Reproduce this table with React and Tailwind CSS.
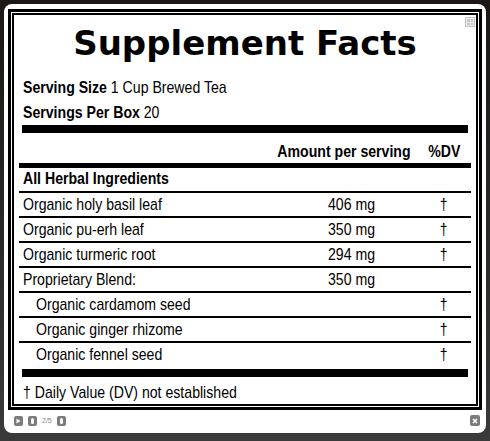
function N({ children, o = 'l' }) {
  const cls =
    o === 'r'
      ? 'inline-block whitespace-nowrap scale-x-[0.83] origin-right'
      : o === 'c'
      ? 'inline-block whitespace-nowrap scale-x-[0.83] origin-center'
      : 'inline-block whitespace-nowrap scale-x-[0.83] origin-left';
  return <span className={cls}>{children}</span>;
}

export default function App() {
  const rows = [
    { name: 'Organic holy basil leaf', amt: '406 mg', dv: '†' },
    { name: 'Organic pu-erh leaf', amt: '350 mg', dv: '†' },
    { name: 'Organic turmeric root', amt: '294 mg', dv: '†' },
    { name: 'Proprietary Blend:', amt: '350 mg', dv: '' },
    { name: 'Organic cardamom seed', amt: '', dv: '†', indent: true },
    { name: 'Organic ginger rhizome', amt: '', dv: '†', indent: true },
    { name: 'Organic fennel seed', amt: '', dv: '†', indent: true, last: true },
  ];
  return (
    <div className="w-[490px] h-[441px] overflow-hidden bg-linear-to-b from-[#1b1815] to-[#3a3a3a] pt-[4px] pl-[4px]">
      <div className="w-[482px] h-[429px] bg-white rounded-[8px] pt-[5px] px-[4px] flex flex-col">
        <div className="relative w-[474px] h-[401px] border-[3px] border-black p-px bg-white">
          <div className="h-full border-2 border-black flex flex-col text-black font-['Liberation_Sans',Arial,sans-serif] text-[17px]">
            <div className="mt-[8px] h-[40px] leading-[40px] text-center font-['DejaVu_Sans',sans-serif] font-bold text-[34px]">
              Supplement Facts
            </div>
            <div className="mt-[12px] pl-[9px] leading-[25px]">
              <div>
                <N><span className="font-bold">Serving Size</span> 1 Cup Brewed Tea</N>
              </div>
              <div>
                <N><span className="font-bold">Servings Per Box</span> 20</N>
              </div>
            </div>
            <div className="h-[8px] mx-[8px] bg-black" />
            <div className="h-[30px] pt-[8px] leading-[22px] flex justify-end pr-[14px] font-bold">
              <span className="flex-1 text-right"><N o="r">Amount per serving</N></span>
              <span className="w-[37px] ml-[14px] text-center"><N o="c">%DV</N></span>
            </div>
            <div className="h-[5px] mx-[5px] bg-black" />
            <div className="mx-[5px] flex flex-col">
              <div className="h-[25px] border-b-2 border-black pl-[4px] leading-[22px] font-bold">
                <N>All Herbal Ingredients</N>
              </div>
              {rows.map((r) => (
                <div
                  key={r.name}
                  className={r.last ? 'h-[26px] flex leading-[23px]' : 'h-[25px] flex leading-[23px] border-b-2 border-black'}
                >
                  <div className={r.indent ? 'flex-1 pl-[17px]' : 'flex-1 pl-[4px]'}><N>{r.name}</N></div>
                  <div className="w-[97px]"><N>{r.amt}</N></div>
                  <div className="w-[37px] text-center"><N o="c">{r.dv}</N></div>
                  <div className="w-[9px]" />
                </div>
              ))}
            </div>
            <div className="h-[8px] mx-[8px] bg-black" />
            <div className="pt-[5px] pl-[9px] leading-[22px]"><N>† Daily Value (DV) not established</N></div>
          </div>
          <div className="absolute top-[5px] right-[4px] w-[10px] h-[10px] border border-[#c4c4c4] bg-[#ececec] grid grid-cols-2 gap-px p-px">
            <div className="bg-[#c8c8c8]" />
            <div className="bg-[#c8c8c8]" />
            <div className="bg-[#c8c8c8]" />
            <div className="bg-[#c8c8c8]" />
          </div>
        </div>
        <div className="mt-[5px] flex items-center pl-[6px] pr-[2px] h-[11px]">
          <div className="w-[9px] h-[10px] rounded-[2px] bg-[#7c7c7c] flex items-center justify-center">
            <svg width="5" height="6" viewBox="0 0 5 6"><path d="M0.5 0.5 L4.5 3 L0.5 5.5 Z" fill="#fff" /></svg>
          </div>
          <div className="ml-[5px] w-[9px] h-[10px] rounded-[2px] bg-[#7c7c7c] flex items-center justify-center">
            <div className="w-[3px] h-[6px] rounded-[2px] bg-white" />
          </div>
          <span className="ml-[5px] text-[7px] leading-[10px] text-[#8a8a8a] font-['Liberation_Sans',sans-serif]">2/5</span>
          <div className="ml-[5px] w-[9px] h-[10px] rounded-[2px] bg-[#7c7c7c] flex items-center justify-center">
            <div className="w-[3px] h-[6px] rounded-[2px] bg-white" />
          </div>
          <div className="flex-1" />
          <div className="w-[10px] h-[11px] rounded-[2px] bg-[#7c7c7c] flex items-center justify-center">
            <svg width="6" height="6" viewBox="0 0 6 6"><path d="M1 1 L5 5 M5 1 L1 5" stroke="#fff" strokeWidth="1.6" /></svg>
          </div>
        </div>
      </div>
    </div>
  );
}
